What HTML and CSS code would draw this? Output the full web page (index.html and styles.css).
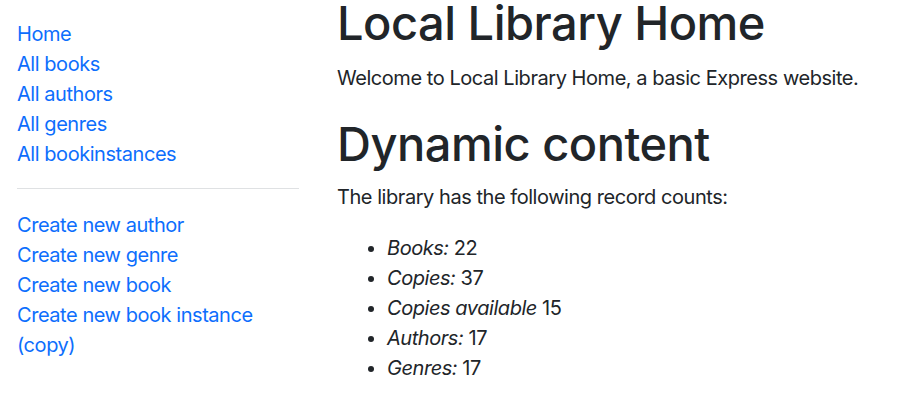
FILE: index.html
```html
<!DOCTYPE html>
<html lang="en">
<head>
<meta charset="utf-8">
<title>Local Library</title>
<link rel="stylesheet" href="styles.css">
</head>
<body>
<div class="page">
  <nav class="sidebar">
    <ul class="nav-list">
      <li><a href="#">Home</a></li>
      <li><a href="#">All books</a></li>
      <li><a href="#">All authors</a></li>
      <li><a href="#">All genres</a></li>
      <li><a href="#">All bookinstances</a></li>
    </ul>
    <hr class="divider">
    <ul class="nav-list nav-list-create">
      <li><a href="#">Create new author</a></li>
      <li><a href="#">Create new genre</a></li>
      <li><a href="#">Create new book</a></li>
      <li><a href="#">Create new book instance (copy)</a></li>
    </ul>
  </nav>
  <main class="content">
    <h1 class="title">Local Library Home</h1>
    <p class="lead-text">Welcome to Local Library Home, a basic Express website.</p>
    <h1 class="title title-second">Dynamic content</h1>
    <p class="lead-text lead-second">The library has the following record counts:</p>
    <ul class="counts">
      <li><em>Books:</em> 22</li>
      <li><em>Copies:</em> 37</li>
      <li><em>Copies available</em> 15</li>
      <li><em>Authors:</em> 17</li>
      <li><em>Genres:</em> 17</li>
    </ul>
  </main>
</div>
</body>
</html>
```

FILE: styles.css
```css
html, body {
  margin: 0;
  padding: 0;
  background: #ffffff;
}

body {
  font-family: Inter, "Noto Sans", "Liberation Sans", sans-serif;
  font-size: 20px;
  line-height: 30px;
  letter-spacing: -0.45px;
  color: #212529;
}

.page {
  display: flex;
  align-items: flex-start;
  padding-left: 17px;
}

.sidebar {
  flex: none;
  width: 282px;
}

.nav-list {
  list-style: none;
  margin: 19px 0 0;
  padding: 0;
}

.nav-list a {
  color: #0d6efd;
  text-decoration: none;
}

.divider {
  margin: 19px 0 0;
  border: 0;
  border-top: 1px solid #dfe1e3;
  height: 0;
}

.nav-list-create {
  margin-top: 21px;
}

.content {
  margin-left: 38px;
  flex: 1;
}

.title {
  font-size: 47px;
  line-height: 46px;
  font-weight: 500;
  letter-spacing: -0.5px;
  margin: 0;
  color: #212529;
}

.title-second {
  margin-top: 28px;
}

.lead-text {
  margin: 17px 0 0;
}

.lead-second {
  margin-top: 15px;
}

.counts {
  margin: 21px 0 0;
  padding-left: 50px;
}

.counts em {
  font-style: italic;
}
```
